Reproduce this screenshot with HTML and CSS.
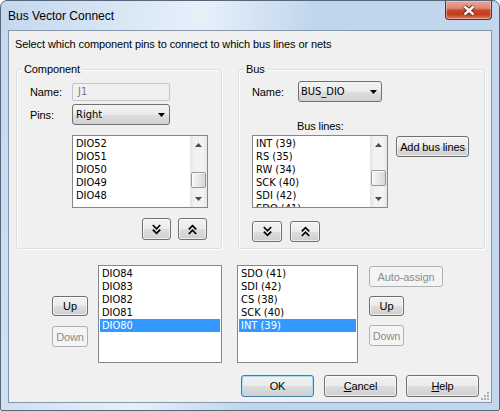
FILE: index.html
```html
<!DOCTYPE html>
<html>
<head>
<meta charset="utf-8">
<title>Bus Vector Connect</title>
<link rel="stylesheet" href="styles.css">
</head>
<body>
<div class="window">
  <div class="titlebar">
    <span class="title">Bus Vector Connect</span>
    <div class="close">
      <svg width="14" height="11" viewBox="0 0 14 11">
        <path d="M2.5 1.5 L11.5 9.5 M11.5 1.5 L2.5 9.5" stroke="#5a1f14" stroke-width="4.2" fill="none"/>
        <path d="M2.5 1.5 L11.5 9.5 M11.5 1.5 L2.5 9.5" stroke="#ffffff" stroke-width="2.4" fill="none"/>
      </svg>
    </div>
  </div>
  <div class="client">
    <div class="intro">Select which component pins to connect to which bus lines or nets</div>
    <div class="groups">
      <div class="group group-comp">
        <span class="legend">Component</span>
        <div class="frow r-name">
          <span class="lbl">Name:</span>
          <div class="textbox">J1</div>
        </div>
        <div class="frow r-pins">
          <span class="lbl">Pins:</span>
          <div class="combo combo-pins"><span>Right</span>
            <svg width="7" height="4" viewBox="0 0 7 4"><polygon points="0,0 7,0 3.5,4" fill="#000"/></svg>
          </div>
        </div>
        <div class="listbox list-top comp-list">
          <div class="items">
            <div class="item">DIO52</div>
            <div class="item">DIO51</div>
            <div class="item">DIO50</div>
            <div class="item">DIO49</div>
            <div class="item">DIO48</div>
          </div>
          <div class="vscroll">
            <div class="sb-btn"><svg width="7" height="4" viewBox="0 0 7 4"><polygon points="0,4 7,4 3.5,0" fill="#4a4a4a"/></svg></div>
            <div class="sb-track thumb-comp"><div class="thumb"></div></div>
            <div class="sb-btn"><svg width="7" height="4" viewBox="0 0 7 4"><polygon points="0,0 7,0 3.5,4" fill="#4a4a4a"/></svg></div>
          </div>
        </div>
        <div class="chev-row chev-comp">
          <button class="btn chev">
            <svg width="9" height="11" viewBox="0 0 9 11"><polyline points="0.8,1 4.5,4.8 8.2,1" fill="none" stroke="#000" stroke-width="1.7"/><polyline points="0.8,5.6 4.5,9.4 8.2,5.6" fill="none" stroke="#000" stroke-width="1.7"/></svg>
          </button>
          <button class="btn chev">
            <svg width="9" height="11" viewBox="0 0 9 11"><polyline points="0.8,5.4 4.5,1.6 8.2,5.4" fill="none" stroke="#000" stroke-width="1.7"/><polyline points="0.8,10 4.5,6.2 8.2,10" fill="none" stroke="#000" stroke-width="1.7"/></svg>
          </button>
        </div>
      </div>

      <div class="group group-bus">
        <span class="legend">Bus</span>
        <div class="frow r-busname">
          <span class="lbl lbl-bus">Name:</span>
          <div class="combo combo-bus"><span>BUS_DIO</span>
            <svg width="7" height="4" viewBox="0 0 7 4"><polygon points="0,0 7,0 3.5,4" fill="#000"/></svg>
          </div>
        </div>
        <div class="buslines-lbl">Bus lines:</div>
        <div class="bus-row">
          <div class="listbox list-top">
            <div class="items">
              <div class="item">INT (39)</div>
              <div class="item">RS (35)</div>
              <div class="item">RW (34)</div>
              <div class="item">SCK (40)</div>
              <div class="item">SDI (42)</div>
              <div class="item">SDO (41)</div>
            </div>
            <div class="vscroll">
              <div class="sb-btn"><svg width="7" height="4" viewBox="0 0 7 4"><polygon points="0,4 7,4 3.5,0" fill="#4a4a4a"/></svg></div>
              <div class="sb-track thumb-bus"><div class="thumb"></div></div>
              <div class="sb-btn"><svg width="7" height="4" viewBox="0 0 7 4"><polygon points="0,0 7,0 3.5,4" fill="#4a4a4a"/></svg></div>
            </div>
          </div>
          <button class="btn btn-add">Add bus lines</button>
        </div>
        <div class="chev-row chev-bus">
          <button class="btn chev chev-wide">
            <svg width="9" height="11" viewBox="0 0 9 11"><polyline points="0.8,1 4.5,4.8 8.2,1" fill="none" stroke="#000" stroke-width="1.7"/><polyline points="0.8,5.6 4.5,9.4 8.2,5.6" fill="none" stroke="#000" stroke-width="1.7"/></svg>
          </button>
          <button class="btn chev chev-wide">
            <svg width="9" height="11" viewBox="0 0 9 11"><polyline points="0.8,5.4 4.5,1.6 8.2,5.4" fill="none" stroke="#000" stroke-width="1.7"/><polyline points="0.8,10 4.5,6.2 8.2,10" fill="none" stroke="#000" stroke-width="1.7"/></svg>
          </button>
        </div>
      </div>
    </div>

    <div class="bottom">
      <div class="side side-left">
        <button class="btn btn-up">Up</button>
        <button class="btn btn-down" disabled>Down</button>
      </div>
      <div class="listbox list-a">
        <div class="items">
          <div class="item">DIO84</div>
          <div class="item">DIO83</div>
          <div class="item">DIO82</div>
          <div class="item">DIO81</div>
          <div class="item sel">DIO80</div>
        </div>
      </div>
      <div class="listbox list-b">
        <div class="items">
          <div class="item">SDO (41)</div>
          <div class="item">SDI (42)</div>
          <div class="item">CS (38)</div>
          <div class="item">SCK (40)</div>
          <div class="item sel">INT (39)</div>
        </div>
      </div>
      <div class="side side-right">
        <button class="btn btn-auto" disabled>Auto-assign</button>
        <button class="btn btn-up btn-up-r">Up</button>
        <button class="btn btn-down btn-down-r" disabled>Down</button>
      </div>
    </div>

    <div class="footer">
      <button class="btn btn-foot btn-ok">OK</button>
      <button class="btn btn-foot"><u>C</u>ancel</button>
      <button class="btn btn-foot"><u>H</u>elp</button>
    </div>

    <svg class="grip" width="10" height="10" viewBox="0 0 10 10">
      <rect x="7" y="1" width="2" height="2" fill="#a9b3bd"/>
      <rect x="4" y="4" width="2" height="2" fill="#a9b3bd"/>
      <rect x="7" y="4" width="2" height="2" fill="#a9b3bd"/>
      <rect x="1" y="7" width="2" height="2" fill="#a9b3bd"/>
      <rect x="4" y="7" width="2" height="2" fill="#a9b3bd"/>
      <rect x="7" y="7" width="2" height="2" fill="#a9b3bd"/>
    </svg>
  </div>
</div>
</body>
</html>
```

FILE: styles.css
```css
* { box-sizing: border-box; }
html, body { margin: 0; padding: 0; }
body {
  width: 500px;
  height: 411px;
  overflow: hidden;
  background: #ffffff;
  font-family: "Liberation Sans", Arial, sans-serif;
  font-size: 11px;
  letter-spacing: -0.1px;
  color: #000;
}

.window {
  width: 500px;
  height: 411px;
  border: 1px solid #56677b;
  border-radius: 7px 7px 2px 2px;
  background: linear-gradient(100deg, #c3d7ee 0%, #d9e7f5 22%, #e7f0f9 36%, #bfd5ed 56%, #c3d8ee 100%);
  padding: 0 7px 7px 7px;
  display: flex;
  flex-direction: column;
}

.titlebar {
  height: 29px;
  display: flex;
  justify-content: space-between;
  align-items: flex-start;
}
.title {
  font-size: 12px;
  letter-spacing: 0;
  line-height: 16px;
  margin-top: 7px;
}
.close {
  width: 47px;
  height: 19px;
  border: 1px solid #6e2a1d;
  border-top: none;
  border-radius: 0 0 4px 4px;
  background: linear-gradient(#e9a899 0%, #dc8671 40%, #c7472a 52%, #c23d1f 75%, #dd7f62 100%);
  display: flex;
  align-items: center;
  justify-content: center;
  box-shadow: inset 0 0 0 1px rgba(255,220,210,0.45);
}

.client {
  position: relative;
  height: 373px;
  border: 1px solid #8597ab;
  background: #f0f0f0;
  padding: 6px 6px 0 7px;
  display: flex;
  flex-direction: column;
}

.intro {
  line-height: 15px;
  margin-left: -1px;
}

.groups {
  display: flex;
  gap: 16px;
  margin-top: 17px;
}
.group {
  height: 180px;
  border: 1px solid #d5dfe5;
  border-radius: 3px;
  box-shadow: inset 1px 1px 0 #ffffff, 1px 1px 0 #ffffff;
  padding-left: 13px;
  display: flex;
  flex-direction: column;
  align-items: flex-start;
}
.group-comp { width: 206px; }
.group-bus { width: 247px; }
.legend {
  margin: -8px 0 0 -8px;
  padding: 0 2px;
  background: #f0f0f0;
  line-height: 14px;
}

.frow { display: flex; align-items: center; }
.lbl { width: 42px; }
.lbl-bus { width: 46px; }
.r-name { margin-top: 7px; height: 18px; }
.r-pins { margin-top: 3px; height: 21px; }
.r-busname { margin-top: 5px; height: 21px; }

.textbox {
  width: 98px;
  height: 18px;
  border: 1px solid #c2c6ca;
  border-radius: 2px;
  background: #f0f0f0;
  color: #7a7a7a;
  font-family: "DejaVu Sans Condensed", "DejaVu Sans", sans-serif;
  font-stretch: condensed;
  letter-spacing: 0;
  line-height: 16px;
  padding-left: 5px;
}

.combo {
  height: 21px;
  border: 1px solid #707070;
  border-radius: 3px;
  background: linear-gradient(#f3f3f3 0%, #ebebeb 50%, #dedede 51%, #d2d2d2 100%);
  display: flex;
  align-items: center;
  justify-content: space-between;
  padding: 0 4px 0 3px;
  font-family: "DejaVu Sans Condensed", "DejaVu Sans", sans-serif;
  font-stretch: condensed;
  letter-spacing: 0;
}
.combo-pins { width: 98px; }
.combo-bus { width: 84px; padding-left: 2px; }

.listbox {
  border: 1px solid #828790;
  background: #ffffff;
  display: flex;
  overflow: hidden;
}
.items {
  flex: 1;
  padding-top: 1px;
  overflow: hidden;
  font-family: "DejaVu Sans Condensed", "DejaVu Sans", sans-serif;
  font-stretch: condensed;
  letter-spacing: 0;
}
.item {
  height: 13px;
  line-height: 13px;
  margin: 0 1px;
  padding-left: 2px;
  white-space: nowrap;
}
.item.sel { background: #3399ff; color: #ffffff; }

.list-top { width: 136px; height: 73px; }
.comp-list { margin-top: 10px; margin-left: 42px; }

.vscroll {
  width: 17px;
  display: flex;
  flex-direction: column;
  background: linear-gradient(to right, #e4e4e4 0%, #f1f1f1 25%, #f3f3f3 75%, #e6e6e6 100%);
}
.sb-btn {
  height: 17px;
  display: flex;
  align-items: center;
  justify-content: center;
}
.sb-track { flex: 1; }
.thumb-comp { padding-top: 19px; }
.thumb-bus { padding-top: 17px; }
.thumb {
  height: 16px;
  margin: 0 1px;
  border: 1px solid #979797;
  border-radius: 2px;
  background: linear-gradient(to right, #f5f5f5 0%, #e9e9e9 50%, #d6d6d6 100%);
  box-shadow: inset 1px 1px 0 #ffffff;
}

.btn {
  font-family: "Liberation Sans", Arial, sans-serif;
  font-size: 11px;
  letter-spacing: -0.1px;
  color: #000;
  border: 1px solid #707070;
  border-radius: 3px;
  background: linear-gradient(#f2f2f2 0%, #ebebeb 50%, #dddddd 51%, #cfcfcf 100%);
  box-shadow: inset 0 0 0 1px rgba(255,255,255,0.6);
  padding: 0;
  margin: 0;
  display: flex;
  align-items: center;
  justify-content: center;
}
.btn:disabled {
  color: #8d8d8d;
  border-color: #adb2b5;
  background: #f4f4f4;
  box-shadow: none;
}

.chev-row {
  display: flex;
  width: 136px;
}
.chev-comp {
  margin-top: 10px;
  margin-left: 42px;
  justify-content: flex-end;
  gap: 7px;
  padding-right: 1px;
}
.chev { width: 29px; height: 22px; }
.chev-bus { margin-top: 13px; gap: 8px; }
.chev-wide { width: 30px; height: 21px; }

.buslines-lbl {
  margin-top: 17px;
  margin-left: 45px;
  line-height: 14px;
}
.bus-row {
  display: flex;
  align-items: flex-start;
  gap: 8px;
  margin-top: 2px;
}
.btn-add { width: 73px; height: 21px; margin-top: 1px; }

.bottom {
  display: flex;
  align-items: flex-start;
  margin-top: 16px;
  margin-left: 36px;
}
.side { display: flex; flex-direction: column; align-items: flex-start; }
.side-left { width: 36px; padding-top: 31px; gap: 10px; }
.btn-up { width: 36px; height: 20px; }
.btn-down { width: 36px; height: 21px; }
.list-a { width: 124px; height: 98px; margin-left: 10px; }
.list-b { width: 121px; height: 98px; margin-left: 15px; }
.side-right { margin-left: 11px; padding-top: 1px; }
.btn-auto { width: 74px; height: 21px; }
.btn-up-r { width: 35px; margin-top: 9px; }
.btn-down-r { width: 35px; margin-top: 9px; }

.footer {
  display: flex;
  justify-content: flex-end;
  gap: 9px;
  margin-top: 12px;
  margin-right: 6px;
}
.btn-foot { width: 73px; height: 22px; }
.btn-ok {
  margin-right: 1px;
  border-color: #3c7fb1;
  box-shadow: inset 0 0 0 1px #a6dcf5;
}
.btn-foot u { text-decoration: underline; }

.grip {
  position: absolute;
  right: 1px;
  bottom: 1px;
}
```
